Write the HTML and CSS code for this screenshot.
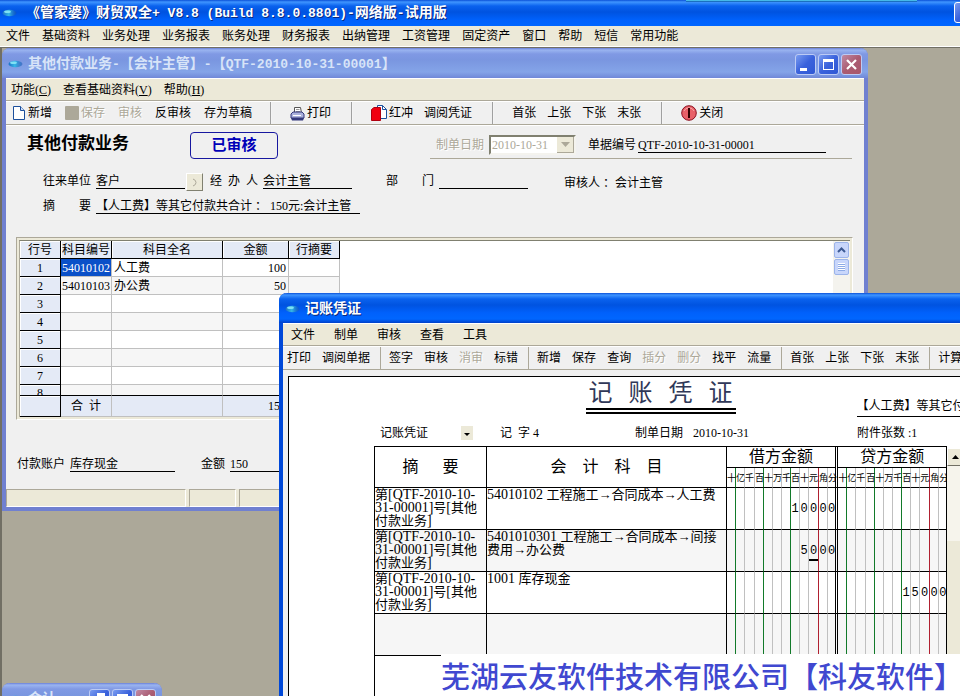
FILE: index.html
```html
<!DOCTYPE html>
<html lang="zh-CN">
<head>
<meta charset="utf-8">
<title>《管家婆》财贸双全+</title>
<link rel="stylesheet" href="styles.css">
</head>
<body>
<svg width="0" height="0" class="defs" aria-hidden="true">
  <defs>
    <linearGradient id="lens" x1="0" x2="1"><stop offset="0" stop-color="#1d6fc4"/><stop offset=".45" stop-color="#35b8e6"/><stop offset="1" stop-color="#1450b0" stop-opacity=".5"/></linearGradient>
    <symbol id="app" viewBox="0 0 15 8"><ellipse cx="7.5" cy="4" rx="7" ry="3.2" fill="url(#lens)"/><ellipse cx="5.5" cy="2.8" rx="3.4" ry="1.2" fill="#7fe0f4"/></symbol>
  </defs>
</svg>
<header class="titlebar main-title">
  <svg class="app-icon" aria-hidden="true"><use href="#app"/></svg>
  <h1>《管家婆》财贸双全<span class="lat">+ V8.8 (Build 8.8.0.8801)-</span>网络版<span class="lat">-</span>试用版</h1>
  <span class="edge-tab"></span>
  <button class="win-btn edge-btn" aria-label="最小化"></button>
</header>
<nav class="menubar main-menu">
  <button>文件</button><button>基础资料</button><button>业务处理</button><button>业务报表</button><button>账务处理</button><button>财务报表</button><button>出纳管理</button><button>工资管理</button><button>固定资产</button><button>窗口</button><button>帮助</button><button>短信</button><button>常用功能</button>
</nav>
<main class="desktop">

  <section class="window inactive payment">
    <header class="titlebar">
      <svg class="app-icon" aria-hidden="true"><use href="#app"/></svg>
      <h2>其他付款业务<span class="lat">-</span>【会计主管】<span class="lat">-</span>【<span class="lat">QTF-2010-10-31-00001</span>】</h2>
      <div class="win-btns">
        <button class="win-btn" aria-label="最小化"><svg viewBox="0 0 19 19"><path d="M4 13h7v3H4z" fill="#fff"/></svg></button>
        <button class="win-btn" aria-label="最大化"><svg viewBox="0 0 19 19"><path d="M4 4h11v11H4zM5 7v7h9V7z" fill="#fff" fill-rule="evenodd"/></svg></button>
        <button class="win-btn close" aria-label="关闭"><svg viewBox="0 0 19 19"><path d="M5 5l9 9M14 5l-9 9" stroke="#fff" stroke-width="2.2"/></svg></button>
      </div>
    </header>
    <nav class="menubar">
      <button>功能(<u>C</u>)</button><button>查看基础资料(<u>V</u>)</button><button>帮助(<u>H</u>)</button>
    </nav>
    <div class="toolbar wide">
      <div class="group first">
        <button><svg width="14" height="16" viewBox="0 0 14 16"><path d="M1.5 1.500h7l4 4v9h-11z" fill="#fff" stroke="#1c4f9c"/><path d="M8.500 1.500v4h4" fill="#cfe0f8" stroke="#1c4f9c"/></svg>新增</button>
        <button disabled><svg width="14" height="14" viewBox="0 0 14 14"><rect width="14" height="14" rx="1" fill="#aca899"/></svg>保存</button>
        <button disabled>审核</button>
        <button>反审核</button>
        <button>存为草稿</button>
      </div>
      <div class="group">
        <button><svg width="15" height="15" viewBox="0 0 15 15"><path d="M4.500 7V1.500h6l1 5.500" fill="#fff" stroke="#555"/><path d="M6 3.500h3.500M6 5.500h4" stroke="#999"/><path d="M1 8l2-2h9l2 2v4H1z" fill="#aab0dc" stroke="#34397c"/><path d="M1 12h13l-1 2.500H2z" fill="#34397c"/><path d="M3 9.500h8" stroke="#fff"/></svg>打印</button>
      </div>
      <div class="group">
        <button><svg width="16" height="16" viewBox="0 0 16 16"><path d="M6.500.500h5l4 4v9h-9z" fill="#fff" stroke="#1c4f9c"/><path d="M11.500.500v4h4" fill="none" stroke="#1c4f9c"/><path d="M.500 4.500L3 2.500h6.500v13h-9z" fill="#f00010" stroke="#b00010"/></svg>红冲</button>
        <button>调阅凭证</button>
      </div>
      <div class="group"><button>首张</button><button>上张</button><button>下张</button><button>末张</button></div>
      <div class="group last">
        <button><svg width="16" height="16" viewBox="0 0 16 16"><circle cx="8" cy="8" r="7.300" fill="#e86068" stroke="#8c1020"/><path d="M3 6a5.500 5.500 0 0 1 10 0" fill="none" stroke="#f5a5a5"/><path d="M8 3v10" stroke="#300" stroke-width="2"/></svg>关闭</button>
      </div>
    </div>
    <form class="form">
      <div class="head-row">
        <h3>其他付款业务</h3>
        <strong class="stamp">已审核</strong>
        <div class="doc-info">
          <label class="off" for="date">制单日期</label>
          <span class="date-box"><select id="date" disabled><option>2010-10-31</option></select><span class="arrow"><svg width="9" height="5" viewBox="0 0 9 5"><path d="M0 0h9L4.500 5z" fill="#aca899"/></svg></span></span>
          <label class="doc-label" for="docno">单据编号</label>
          <input id="docno" class="line docno" value="QTF-2010-10-31-00001">
        </div>
      </div>
      <div class="row">
        <label for="unit">往来单位</label><input id="unit" class="line" value="客户">
        <button type="button" class="pick" aria-label="选择往来单位"><svg width="5" height="9" viewBox="0 0 5 9"><path d="M1 1q3 1 3 3.500T1 8" fill="none" stroke="#aca899"/></svg></button>
        <label class="spread handler" for="handler"><span>经</span><span>办</span><span>人</span></label><input id="handler" class="line" value="会计主管">
        <label class="spread dept" for="dept"><span>部</span><span>门</span></label><input id="dept" class="line" value="">
        <span class="auditor">审核人 ：会计主管</span>
      </div>
      <div class="row memo-row">
        <label class="spread memo" for="memo"><span>摘</span><span>要</span></label><input id="memo" class="line memo-in" value="【人工费】等其它付款共合计 ： 150元:会计主管">
      </div>
      <div class="grid-frame">
        <div class="grid-body">
          <table class="lines">
            <colgroup><col class="c-no"><col class="c-code"><col class="c-name"><col class="c-amt"><col class="c-memo"></colgroup>
            <thead><tr><th>行号</th><th>科目编号</th><th>科目全名</th><th>金额</th><th>行摘要</th></tr></thead>
            <tbody>
              <tr><th>1</th><td class="picked">54010102</td><td>人工费</td><td class="num">100</td><td></td></tr>
              <tr><th>2</th><td>54010103</td><td>办公费</td><td class="num">50</td><td></td></tr>
              <tr><th>3</th><td></td><td></td><td></td><td></td></tr>
              <tr><th>4</th><td></td><td></td><td></td><td></td></tr>
              <tr><th>5</th><td></td><td></td><td></td><td></td></tr>
              <tr><th>6</th><td></td><td></td><td></td><td></td></tr>
              <tr><th>7</th><td></td><td></td><td></td><td></td></tr>
              <tr class="cut"><th><div>8</div></th><td></td><td></td><td></td><td></td></tr>
            </tbody>
            <tfoot><tr><th></th><td class="sum">合 &nbsp;计</td><td></td><td class="num">150</td><td></td></tr></tfoot>
          </table>
          <div class="scroll">
            <button type="button" aria-label="向上"><svg width="9" height="6" viewBox="0 0 9 6"><path d="M1 5l3.500-3.500L8 5" fill="none" stroke="#3d5a94" stroke-width="2"/></svg></button>
            <button type="button" aria-label="滑块"><svg width="7" height="8" viewBox="0 0 7 8"><path d="M0 .500h7M0 2.500h7M0 4.500h7M0 6.500h7" stroke="#fff"/><path d="M0 1.500h7M0 3.500h7M0 5.500h7M0 7.500h7" stroke="#8caae6"/></svg></button>
          </div>
        </div>
      </div>
      <div class="row pay-row">
        <label for="acct">付款账户</label><input id="acct" class="line acct" value="库存现金">
        <label class="amount" for="amt">金额</label><input id="amt" class="line" value="150">
      </div>
      <div class="status"><span class="s1"></span><span class="s2"></span><span class="s3"></span></div>
    </form>
  </section>

  <section class="window voucher">
    <header class="titlebar">
      <svg class="app-icon" aria-hidden="true"><use href="#app"/></svg>
      <h2>记账凭证</h2>
    </header>
    <nav class="menubar"><button>文件</button><button>制单</button><button>审核</button><button>查看</button><button>工具</button></nav>
    <div class="toolbar">
      <div class="group first"><button>打印</button><button>调阅单据</button></div>
      <div class="group"><button>签字</button><button>审核</button><button disabled>消审</button><button>标错</button></div>
      <div class="group"><button>新增</button><button>保存</button><button>查询</button><button disabled>插分</button><button disabled>删分</button><button>找平</button><button>流量</button></div>
      <div class="group"><button>首张</button><button>上张</button><button>下张</button><button>末张</button></div>
      <div class="group last"><button>计算</button></div>
    </div>
    <div class="paper">
      <div class="sheet">
        <div class="sheet-head">
          <h3><span>记</span><span>账</span><span>凭</span><span>证</span></h3>
          <p class="note">【人工费】等其它付款共合计</p>
        </div>
        <div class="meta">
          <span class="kind"><select aria-label="凭证类型"><option>记账凭证</option></select><svg width="12" height="14" viewBox="0 0 12 14"><rect width="12" height="14" fill="#ece9d8"/><path d="M3 7h6L6 10z"/></svg></span>
          <span class="word"><span>记</span><span>字 4</span></span>
          <span>制单日期</span><span>2010-10-31</span><span>附件张数 :1</span>
        </div>
        <table class="ledger">
          <colgroup><col class="l-memo"><col class="l-subj"><col class="u"><col class="u"><col class="uw"><col class="u"><col class="u"><col class="u"><col class="u"><col class="u"><col class="u"><col class="uw"><col class="u"><col class="ul"><col class="gap"><col class="u"><col class="u"><col class="uw"><col class="u"><col class="u"><col class="u"><col class="u"><col class="u"><col class="u"><col class="uw"><col class="u"><col class="ul"></colgroup>
          <thead>
            <tr><th rowspan="2"><div class="far"><span>摘</span><span>要</span></div></th><th rowspan="2">会　计　科　目</th><th colspan="12" class="side">借方金额</th><th rowspan="2" class="gap"></th><th colspan="12" class="side">贷方金额</th></tr>
            <tr class="units"><th class="g">十</th><th>亿</th><th>千</th><th class="g">百</th><th>十</th><th>万</th><th class="g">千</th><th>百</th><th>十</th><th class="r">元</th><th>角</th><th class="k">分</th><th class="g">十</th><th>亿</th><th>千</th><th class="g">百</th><th>十</th><th>万</th><th class="g">千</th><th>百</th><th>十</th><th class="r">元</th><th>角</th><th class="k">分</th></tr>
          </thead>
          <tbody>
            <tr><td class="t">第<b>[QTF-2010-10-</b><br><b>31-00001]</b>号<b>[</b>其他<br>付款业务<b>]</b></td><td class="t"><b>54010102 </b> 工程施工→合同成本→人工费</td><td class="g"></td><td></td><td></td><td class="g"></td><td></td><td></td><td class="g"></td><td>1</td><td>0</td><td class="r">0</td><td>0</td><td class="k">0</td><td class="gap"></td><td class="g"></td><td></td><td></td><td class="g"></td><td></td><td></td><td class="g"></td><td></td><td></td><td class="r"></td><td></td><td class="k"></td></tr>
            <tr><td class="t">第<b>[QTF-2010-10-</b><br><b>31-00001]</b>号<b>[</b>其他<br>付款业务<b>]</b></td><td class="t"><b>5401010301 </b> 工程施工→合同成本→间接<br>费用→办公费</td><td class="g"></td><td></td><td></td><td class="g"></td><td></td><td></td><td class="g"></td><td></td><td>5</td><td class="r"><span class="caret">0</span></td><td>0</td><td class="k">0</td><td class="gap"></td><td class="g"></td><td></td><td></td><td class="g"></td><td></td><td></td><td class="g"></td><td></td><td></td><td class="r"></td><td></td><td class="k"></td></tr>
            <tr><td class="t">第<b>[QTF-2010-10-</b><br><b>31-00001]</b>号<b>[</b>其他<br>付款业务<b>]</b></td><td class="t"><b>1001 </b> 库存现金</td><td class="g"></td><td></td><td></td><td class="g"></td><td></td><td></td><td class="g"></td><td></td><td></td><td class="r"></td><td></td><td class="k"></td><td class="gap"></td><td class="g"></td><td></td><td></td><td class="g"></td><td></td><td></td><td class="g"></td><td>1</td><td>5</td><td class="r">0</td><td>0</td><td class="k">0</td></tr>
            <tr><td></td><td class="k"></td><td class="g"></td><td></td><td></td><td class="g"></td><td></td><td></td><td class="g"></td><td></td><td></td><td class="r"></td><td></td><td class="k"></td><td class="gap"></td><td class="g"></td><td></td><td></td><td class="g"></td><td></td><td></td><td class="g"></td><td></td><td></td><td class="r"></td><td></td><td class="k"></td></tr>
            <tr><td colspan="27"></td></tr>
          </tbody>
        </table>
      </div>
      <div class="old-scroll"><button aria-label="向上"><svg width="7" height="4" viewBox="0 0 7 4"><path d="M0 4h7L3.500 0z"/></svg></button><span></span></div>
    </div>
  </section>

  <section class="window inactive mini">
    <header class="titlebar">
      <svg class="app-icon" aria-hidden="true"><use href="#app"/></svg>
      <h2>会计</h2>
      <div class="win-btns">
        <button class="win-btn" aria-label="还原"><svg viewBox="0 0 19 19"><path d="M7 3h8v8h-2V6H7zM4 8h7v7H4z" fill="#fff"/></svg></button>
        <button class="win-btn" aria-label="最大化"><svg viewBox="0 0 19 19"><path d="M4 4h11v11H4zM5 8v6h9V8z" fill="#fff" fill-rule="evenodd"/></svg></button>
        <button class="win-btn close" aria-label="关闭"><svg viewBox="0 0 19 19"><path d="M5 5l9 9M14 5l-9 9" stroke="#fff" stroke-width="2.200"/></svg></button>
      </div>
    </header>
    <div class="mini-body"></div>
  </section>
</main>
<footer class="banner">芜湖云友软件技术有限公司【科友软件】</footer>
</body>
</html>
```
FILE: styles.css
```css
* { box-sizing: border-box; }
html, body { height: 100%; }
body {
  margin: 0;
  display: flex;
  flex-direction: column;
  overflow: hidden;
  position: relative;
  color: #000;
  font: 12px/16px "Liberation Serif", "Noto Sans CJK SC", serif;
}
h1, h2, h3, p { margin: 0; font-weight: normal; }
button, input, select { font: inherit; color: inherit; margin: 0; padding: 0; border: 0; background: none; }
button { white-space: nowrap; }
.defs { position: absolute; }

/* title bars */
.titlebar {
  display: flex;
  align-items: center;
  flex: none;
  height: 30px;
  padding: 0 3px 0 5px;
  color: #fff;
  background: linear-gradient(#0a50d8 0, #3f95ff 2px, #0a62ee 6px, #0053e0 12px, #0061fc 20px, #0066ff 26px, #0040c8 30px);
}
.titlebar h1, .titlebar h2 {
  flex: 1;
  font-size: 14px;
  line-height: 20px;
  font-weight: bold;
  white-space: nowrap;
  overflow: hidden;
  text-shadow: 1px 1px #0a2a80;
}
.lat { font-family: "Liberation Mono", monospace; font-size: 13px; white-space: pre; }
.app-icon { width: 15px; height: 8px; margin-right: 5px; flex: none; }
.main-title { height: 26px; padding-left: 2px; position: relative; }
.main-title .app-icon { margin-right: 9px; }
.edge-tab { position: absolute; top: 0; right: 43px; width: 231px; height: 2px; background: #45b8e8; border-bottom: 1px solid #1a6fc0; }
.edge-btn { position: absolute; right: -15px; top: 2px; }
.win-btns { display: flex; gap: 2px; }
.win-btn {
  width: 21px;
  height: 21px;
  border: 1px solid #fff;
  border-radius: 3px;
  background: linear-gradient(135deg, #7a9cf0, #3a62dc 50%, #2f58d4);
}
.win-btn svg { display: block; width: 19px; height: 19px; }
.inactive .win-btn { border-color: #bccbf5; }
.inactive .close { background: linear-gradient(135deg, #c08aa4, #aa5c72 50%, #a8566c); }

/* menus and toolbars */
.menubar {
  display: flex;
  align-items: center;
  flex: none;
  gap: 12px;
  height: 23px;
  padding: 1px 5px 0;
  background: #ece9d8;
  border-top: 1px solid #fff;
  border-bottom: 1px solid #aca899;
}
.main-menu { height: 21px; padding: 0 6px; border-top: 0; border-bottom: 1px solid #fff; }
.toolbar {
  display: flex;
  flex: none;
  height: 24px;
  background: #f0f0f0;
  border-top: 1px solid #fff;
  border-bottom: 1px solid #aca899;
}
.group {
  display: flex;
  align-items: center;
  gap: 11px;
  padding: 0 10px 0 8px;
  border-right: 1px solid #aca899;
  white-space: nowrap;
}
.group.first { padding-left: 4px; }
.group.last { border-right: 0; }
.wide .group { padding: 0 20px 0 18px; border-right: 2px groove #f4f4f4; }
.wide .group.first { padding: 0 18px 0 6px; gap: 13px; }
.wide .group.last { border-right: 0; }
.toolbar button { display: flex; align-items: center; gap: 2px; }
.toolbar button:disabled, .off { color: #aca899; text-shadow: 1px 1px #fff; }

/* desktop */
.desktop {
  flex: 1;
  min-height: 0;
  position: relative;
  overflow: hidden;
  background: #aca899;
  box-shadow: inset 2px 1px #716f64;
}
.window {
  position: absolute;
  display: flex;
  flex-direction: column;
  border: solid #0048d8;
  border-width: 0 4px 4px;
  border-radius: 8px 8px 0 0;
  background: #f0f0f0;
}
.window .titlebar { margin: 0 -4px; border-radius: 8px 8px 0 0; padding: 2px 6px 0 6px; }
.inactive { border-color: #7080d0; }
.inactive .titlebar {
  color: #d8e4f8;
  background: linear-gradient(#6a80d8 0, #9ab4f0 2px, #8099e4 6px, #7a96e0 12px, #84a4e8 24px, #7088d8 30px);
}
.inactive .titlebar h2 { text-shadow: none; }
.payment { left: 2px; top: 1px; width: calc(90% + 2px); }
.voucher { left: 279px; right: -60px; top: 246px; bottom: -30px; }
.mini { left: 2px; top: 636px; width: 160px; }
.mini-body { height: 60px; }

/* payment form */
.form { display: flex; flex-direction: column; border-top: 1px solid #fff; }
.head-row { display: flex; padding: 6px 12px 0 21px; }
.head-row h3 { width: 102px; font-size: 17px; line-height: 24px; font-weight: bold; white-space: nowrap; }
.stamp {
  width: 88px;
  height: 27px;
  margin-left: 61px;
  border: 1px solid #1818a0;
  border-radius: 4px;
  color: #0000b8;
  font-size: 15px;
  line-height: 25px;
  text-align: center;
}
.doc-info {
  flex: 1;
  display: flex;
  align-items: center;
  margin-left: 152px;
  padding-left: 6px;
  border-bottom: 1px solid #aca899;
}
.date-box {
  display: flex;
  width: 87px;
  height: 20px;
  margin-left: 5px;
  border: 2px solid;
  border-color: #808070 #f4f3ee #f4f3ee #808070;
  background: #fff;
}
.date-box select { appearance: none; flex: 1; min-width: 0; padding-left: 1px; opacity: 1; color: #aca899; }
.arrow { width: 17px; display: grid; place-items: center; background: #ece9d8; border: solid #aca899; border-width: 0 1px 1px 0; }
.doc-label { margin-left: 12px; }
.line { height: 16px; width: 89px; border-bottom: 1px solid #000; outline: 0; }
.line.docno { width: 188px; margin-left: 2px; }
.row { display: flex; padding-left: 37px; margin-top: 14px; height: 18px; white-space: nowrap; }
.row .line { margin-left: 5px; }
.pick { width: 17px; height: 18px; margin-left: 1px; background: #ece9d8; border: 1px solid; border-color: #fff #808070 #808070 #fff; }
.pick svg { display: block; margin: auto; }
.spread { display: flex; justify-content: space-between; width: 48px; height: 16px; }
.handler { margin-left: 7px; }
.dept { margin-left: 34px; }
.auditor { margin-left: 36px; align-self: flex-end; }
.memo-row { margin-top: 7px; height: 16px; }
.row .memo-in { width: 264px; }
.pay-row { padding-left: 11px; margin-top: 36px; height: 16px; }
.row .acct { width: 105px; }
.amount { margin-left: 26px; }
.grid-frame { margin: 23px 11px 0 10px; padding: 2px; background: #ece9d8; border: 1px solid; border-color: #aca899 #fff #fff #aca899; }
.grid-body { display: flex; justify-content: space-between; background: #fff; border-top: 1px solid #808070; border-left: 1px solid #aca899; }
.lines { table-layout: fixed; width: 320px; border-collapse: separate; border-spacing: 0; line-height: 16px; }
.c-no { width: 41px; }
.c-code, .c-memo { width: 51px; }
.c-name { width: 111px; }
.c-amt { width: 66px; }
.lines th, .lines td { height: 18px; padding: 0 1px; white-space: nowrap; font-weight: normal; border-right: 1px solid #c0c0c0; border-bottom: 1px solid #c0c0c0; }
.lines td + td { padding-left: 2px; }
.lines th { background: #e4eaf6; border-color: #000; box-shadow: inset 1px 1px #fff; padding: 0; }
.lines td.num { text-align: right; padding-right: 2px; }
.lines tbody tr:nth-child(even) td { background: #f6f6f6; }
.lines .picked { background: #0a50c8; color: #fff; }
.lines .cut th, .lines .cut td { height: 11px; border-bottom-color: #000; }
.cut div { height: 10px; overflow: hidden; }
.lines tfoot th, .lines tfoot td { height: 21px; background: #e4eaf6; }
.lines tfoot .sum { text-align: center; }
.scroll { width: 17px; padding: 1px 0 0 1px; display: flex; flex-direction: column; gap: 1px; background: #f4f3ee; }
.scroll button { width: 15px; height: 16px; border: 1px solid #9cb4ea; border-radius: 2px; background: #c8d6fb; display: grid; place-items: center; }
.status { display: flex; gap: 3px; height: 18px; margin-top: 17px; background: #ece9d8; }
.status span { border: 1px solid; border-color: #aca899 #fff #fff #aca899; }
.s1 { width: 180px; }
.s2 { width: 47px; }
.s3 { flex: 1; }

/* voucher */
.voucher .menubar { gap: 19px; padding-left: 8px; }
.paper { flex: 1; display: flex; margin: 6px 0 0 5px; padding-left: 85px; background: #fff; border: solid #000; border-width: 1px 0 0 1px; }
.sheet { width: 573px; flex: none; }
.sheet-head { display: grid; grid-template-columns: minmax(0, 1fr) 150px minmax(0, 1fr); height: 40px; padding-top: 3px; }
.sheet-head h3 {
  grid-column: 2;
  height: 34px;
  display: flex;
  justify-content: center;
  gap: 16px;
  color: #303858;
  font-size: 24px;
  line-height: 26px;
  border-bottom: 6px double #000;
}
.note { justify-self: start; margin: 18px 0 0 121px; height: 19px; border-bottom: 1px solid #000; white-space: nowrap; }
.meta { display: grid; grid-template-columns: 120px 135px 58px 164px max-content; padding-left: 6px; margin: 8px 0 5px; white-space: nowrap; }
.kind { display: flex; align-items: center; }
.kind select { appearance: none; width: 81px; }
.word { display: flex; gap: 6px; }
.ledger { table-layout: fixed; width: 573px; border-collapse: separate; border-spacing: 0; border-top: 1px solid #000; border-left: 1px solid #000; }
.l-memo { width: 112px; }
.l-subj { width: 240px; }
.u { width: 9px; }
.uw { width: 10px; }
.ul { width: 8px; }
col.gap { width: 2px; }
.ledger th, .ledger td { padding: 0; font-weight: normal; border-right: 1px solid #c0c0c0; border-bottom: 1px solid #000; }
.ledger td { height: 42px; font-family: "Liberation Mono", monospace; line-height: 16px; text-align: center; }
.ledger thead th { font-size: 16px; line-height: 20px; border-right-color: #000; }
.ledger .far { display: flex; justify-content: center; gap: 24px; }
.ledger thead .units th { height: 20px; font-size: 9px; line-height: 16px; border-right-color: #c0c0c0; }
.ledger tbody tr:nth-child(even) td { background: #f6f6f6; }
.ledger td.t { vertical-align: top; text-align: left; font: 13px/13px "Liberation Serif", "Noto Sans CJK SC", serif; white-space: nowrap; border-right-color: #000; }
.t b { font-weight: normal; font-size: 14px; }
.ledger tr .g, .ledger thead .units .g { border-right-color: #127a2a; }
.ledger tr .r, .ledger thead .units .r { border-right-color: #b02030; }
.ledger tr .k, .ledger tr .gap, .ledger thead .units .k, .ledger tr td:first-child { border-right-color: #000; }
.ledger tr td[colspan] { border-right-color: #fff; height: 60px; }
.caret { display: block; border-bottom: 2px solid #000; margin-top: 2px; }
.old-scroll { width: 17px; margin-top: 71px; background: #ece9d8; }
.old-scroll button { display: grid; place-items: center; width: 17px; height: 18px; background: #ece9d8; border: 1px solid; border-color: #fff #716f64 #716f64 #fff; }
.old-scroll span { display: block; height: 75px; background: #f6f4ec; }

.banner {
  position: absolute;
  right: 0;
  bottom: 0;
  width: 519px;
  height: 42px;
  overflow: hidden;
  background: #fff;
  color: #4048d0;
  font: 500 29px/42px "Noto Sans CJK SC", sans-serif;
  white-space: nowrap;
}
```
